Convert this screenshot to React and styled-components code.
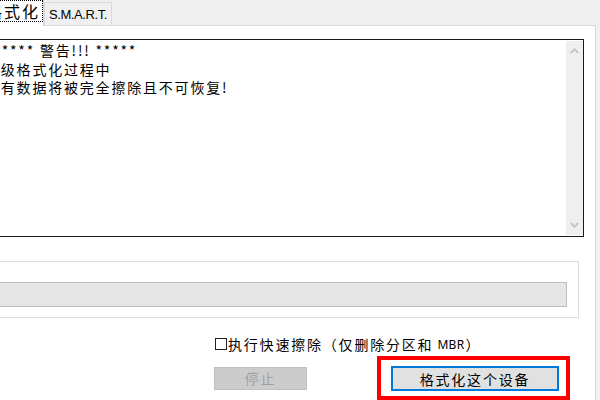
import React from 'react';
import styled, { createGlobalStyle } from 'styled-components';

const GlobalStyle = createGlobalStyle`
  html, body {
    margin: 0;
    height: 400px;
    overflow: hidden;
    background: #f0f0f0;
  }
`;

const cjk = `"Noto Sans CJK SC", "Noto Sans", sans-serif`;

const Window = styled.div`
  width: 676px;
  margin-left: -80px;
  display: flex;
  flex-direction: column;
  font-family: ${cjk};
  color: #000;
`;

const TabRow = styled.div`
  height: 25px;
  display: flex;
  align-items: flex-end;
  padding-left: 14px;
`;

const Tab = styled.div`
  box-sizing: border-box;
  display: flex;
  align-items: center;
  border: 1px solid #d9d9d9;
  border-bottom: none;
  white-space: nowrap;
  ${p => (p.active
    ? `
    width: 110px;
    height: 28px;
    justify-content: flex-end;
    margin-bottom: -1px;
    background: #fff;
    position: relative;
    z-index: 1;
    font-size: 16px;
    letter-spacing: 2px;
  `
    : `
    width: 68px;
    height: 23px;
    justify-content: center;
    background: #f0f0f0;
    font-family: "Liberation Sans", Arial, sans-serif;
    font-size: 13px;
    letter-spacing: -0.4px;
  `)}
`;

const FocusLabel = styled.span`
  padding: 0 2px 0 3px;
  line-height: 20px;
  outline: 1px dotted #000;
  outline-offset: 0;
  margin: 0 1px 3px 0;
`;

const Panel = styled.div`
  background: #fff;
  border: 1px solid #d9d9d9;
  padding: 13px 11px 0 59px;
  height: 420px;
  display: flex;
  flex-direction: column;
`;

const TextBox = styled.div`
  height: 198px;
  box-sizing: border-box;
  border: 1px solid #1a1a1a;
  display: flex;
`;

const TextArea = styled.div`
  flex: 1;
  padding: 1px 4px;
  font-size: 14px;
  line-height: 18.5px;
  letter-spacing: 1.8px;
  white-space: pre;
  overflow: hidden;
`;

const ScrollBar = styled.div`
  width: 17px;
  margin: 1px 0;
  background: #efefef;
  display: flex;
  flex-direction: column;
  justify-content: space-between;
  align-items: center;
  padding: 7px 0;
  box-sizing: border-box;
`;

const Chevron = ({ down }) => (
  <svg width="9" height="6" viewBox="0 0 9 6">
    <polyline
      points={down ? '0.8,1 4.5,4.8 8.2,1' : '0.8,5 4.5,1.2 8.2,5'}
      fill="none"
      stroke="#c4c4c4"
      strokeWidth="1.8"
    />
  </svg>
);

const GroupBox = styled.div`
  margin-top: 24px;
  margin-right: 5px;
  border: 1px solid #dcdcdc;
  padding: 20px 11px 10px 10px;
`;

const ProgressBar = styled.div`
  height: 25px;
  box-sizing: border-box;
  background: #e6e6e6;
  border: 1px solid #bcbcbc;
`;

const ActionArea = styled.div`
  align-self: flex-end;
  margin-right: 14px;
  margin-top: 17px;
  display: flex;
  flex-direction: column;
  align-items: flex-start;
  gap: 3px;
`;

const CheckRow = styled.label`
  display: flex;
  align-items: center;
  height: 18px;
  font-size: 14px;
  letter-spacing: 1.8px;
  white-space: nowrap;
`;

const CheckBox = styled.span`
  width: 12px;
  height: 12px;
  box-sizing: border-box;
  border: 1px solid #222;
  margin: 0 1px 0 1px;
`;

const Latin = styled.span`
  font-family: "Noto Sans", sans-serif;
  font-size: 12px;
  letter-spacing: 0.3px;
  margin: 0 1px 0 4px;
`;

const ButtonRow = styled.div`
  display: flex;
  align-items: center;
  gap: 70px;
`;

const Button = styled.div`
  box-sizing: border-box;
  display: flex;
  align-items: center;
  justify-content: center;
  font-size: 14px;
  letter-spacing: 1.8px;
  ${p => (p.disabled
    ? `
    width: 93px;
    height: 23px;
    background: #cccccc;
    border: 1px solid #bfbfbf;
    color: #9f9f9f;
  `
    : `
    width: 168px;
    height: 25px;
    background: #e1e1e1;
    border: 2px solid #0078d7;
    color: #000;
  `)}
`;

const Highlight = styled.div`
  border: 4px solid #ff0000;
  padding: 6px 7px 5px 10px;
`;

export default function App() {
  return (
    <>
      <GlobalStyle />
      <Window>
        <TabRow>
          <Tab active><FocusLabel>低级格式化</FocusLabel></Tab>
          <Tab>S.M.A.R.T.</Tab>
        </TabRow>
        <Panel>
          <TextBox>
            <TextArea>
              {'****** 警告!!! *****\n低级格式化过程中\n所有数据将被完全擦除且不可恢复!'}
            </TextArea>
            <ScrollBar>
              <Chevron />
              <Chevron down />
            </ScrollBar>
          </TextBox>
          <GroupBox>
            <ProgressBar />
          </GroupBox>
          <ActionArea>
            <CheckRow>
              <CheckBox />
              执行快速擦除（仅删除分区和<Latin>MBR</Latin>）
            </CheckRow>
            <ButtonRow>
              <Button disabled>停止</Button>
              <Highlight>
                <Button>格式化这个设备</Button>
              </Highlight>
            </ButtonRow>
          </ActionArea>
        </Panel>
      </Window>
    </>
  );
}
